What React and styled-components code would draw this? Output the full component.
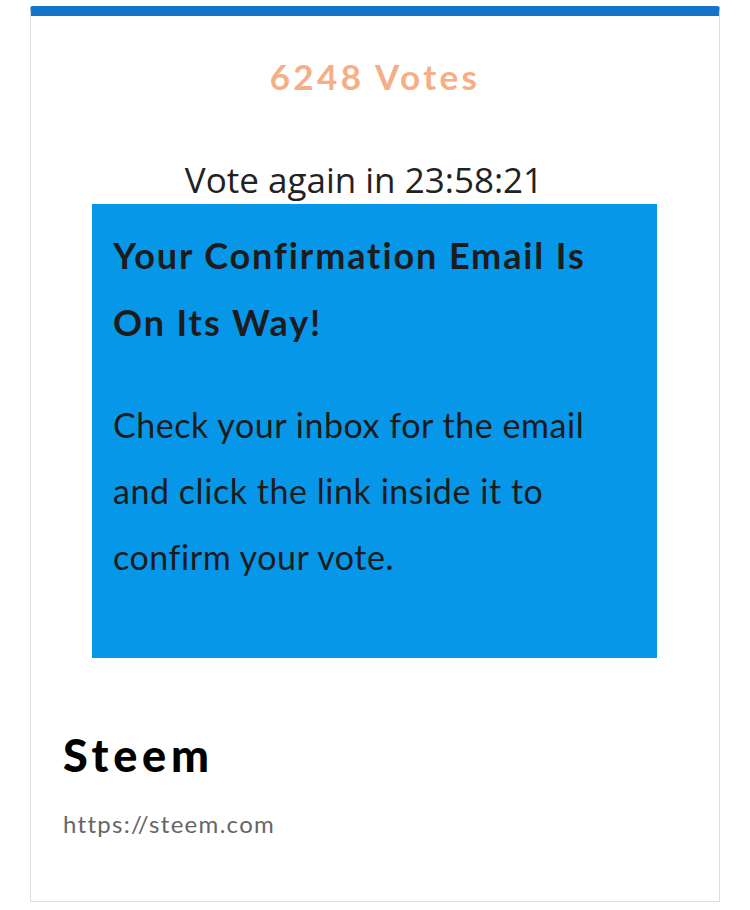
import React from "react";
import styled, { createGlobalStyle } from "styled-components";

const GlobalStyle = createGlobalStyle`
  html, body {
    margin: 0;
    padding: 0;
    background: #fff;
  }
  body {
    padding: 6px 30px 0 30px;
    font-family: Lato, "Noto Sans", sans-serif;
  }
`;

const Card = styled.div`
  width: 690px;
  height: 896px;
  box-sizing: border-box;
  border: 1px solid #dddddb;
  border-top: 10px solid #1474c8;
  border-radius: 3px 3px 0 0;
  display: flex;
  flex-direction: column;
`;

const Votes = styled.h2`
  margin: 0;
  padding-top: 38px;
  text-align: center;
  color: #f5ae85;
  font-weight: 700;
  font-size: 35px;
  line-height: 44px;
  letter-spacing: 3.4px;
`;

const Countdown = styled.div`
  margin-top: 61px;
  padding-right: 22px;
  text-align: center;
  color: #222;
  font-family: "Open Sans", sans-serif;
  font-size: 35px;
  line-height: 42px;
`;

const Notice = styled.div`
  margin: 3px 0 0 61px;
  width: 565px;
  height: 454px;
  box-sizing: border-box;
  background: #0797e8;
  padding: 18px 21px 0;
  color: #1c1c1c;
`;

const NoticeTitle = styled.h3`
  margin: 0;
  max-width: 505px;
  font-weight: 700;
  font-size: 36px;
  line-height: 67px;
  letter-spacing: 1.9px;
`;

const NoticeText = styled.p`
  margin: 36px 0 0;
  max-width: 500px;
  font-weight: 400;
  font-size: 34px;
  line-height: 66px;
  letter-spacing: 0.55px;
`;

const Footer = styled.div`
  padding: 69px 0 0 32px;
`;

const SiteName = styled.h1`
  margin: 0;
  color: #000;
  font-weight: 900;
  font-size: 45px;
  line-height: 56px;
  letter-spacing: 4.8px;
`;

const SiteUrl = styled.div`
  margin-top: 26px;
  color: #666;
  font-weight: 400;
  font-size: 24px;
  line-height: 30px;
  letter-spacing: 1.3px;
`;

export default function App() {
  return (
    <>
      <GlobalStyle />
      <Card>
        <Votes>6248 Votes</Votes>
        <Countdown>Vote again in 23:58:21</Countdown>
        <Notice>
          <NoticeTitle>Your Confirmation Email Is On Its Way!</NoticeTitle>
          <NoticeText>
            Check your inbox for the email and click the link inside it to
            confirm your vote.
          </NoticeText>
        </Notice>
        <Footer>
          <SiteName>Steem</SiteName>
          <SiteUrl>https://steem.com</SiteUrl>
        </Footer>
      </Card>
    </>
  );
}
